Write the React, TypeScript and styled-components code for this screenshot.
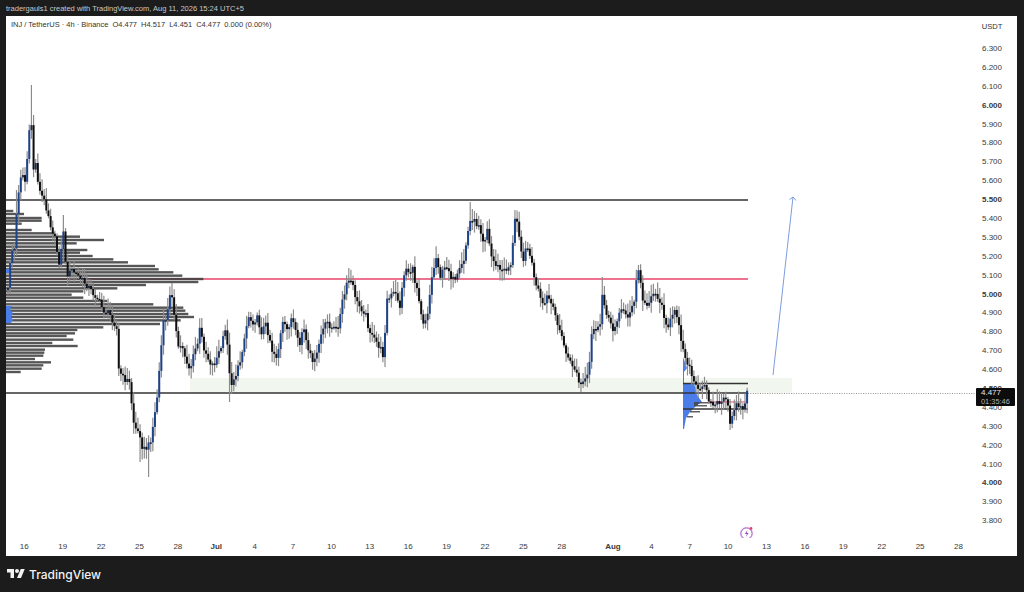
import * as React from 'react';
import styled, { createGlobalStyle } from 'styled-components';

const GlobalStyle = createGlobalStyle`
    html, body {
        margin: 0;
        padding: 0;
        background: #1c1c1c;
    }
    body {
        font-family: 'Liberation Sans', Arial, sans-serif;
    }
`

const Page = styled.div`
    width: 1024px;
    height: 592px;
    background: #1c1c1c;
    display: flex;
    flex-direction: column;
    overflow: hidden;
`

const Caption = styled.div`
    height: 16px;
    padding-left: 6px;
    font-size: 7.5px;
    line-height: 18px;
    color: #c9c9c9;
    white-space: nowrap;
`

const ChartPanel = styled.div`
    width: 1011px;
    height: 540px;
    margin-left: 6px;
    background: #fff;
    position: relative;
    display: grid;
    grid-template-columns: 969px 42px;
    grid-template-rows: 522px 18px;
`

const Plot = styled.div`
    position: relative;
    overflow: hidden;
    svg.plot {
        display: block;
        filter: blur(0.4px);
    }
`

const Legend = styled.div`
    position: absolute;
    left: 5px;
    top: 4px;
    font-size: 7.5px;
    line-height: 10px;
    color: #333;
    white-space: nowrap;
    span {
        margin-left: 4px;
    }
`

const PriceAxis = styled.div`
    display: flex;
    flex-direction: column;
    align-items: center;
    padding-right: 8px;
    padding-top: 5px;
    box-sizing: border-box;
`

const Currency = styled.div`
    height: 19px;
    line-height: 12px;
    font-size: 7.6px;
    color: #333;
`

const PriceLabel = styled.div<{ $bold: boolean }>`
    height: 18.9px;
    flex: none;
    line-height: 18.9px;
    font-size: 8px;
    color: #3a3a3a;
    font-weight: ${props => props.$bold ? 700 : 400};
`

const TimeAxis = styled.div`
    grid-column: 1 / 3;
    display: flex;
    margin-left: -0.9px;
    padding-top: 3px;
`

const TimeTick = styled.div<{ $bold: boolean; $gap: boolean }>`
    width: 38.4px;
    flex: none;
    text-align: center;
    font-size: 8px;
    line-height: 12px;
    color: #3a3a3a;
    font-weight: ${props => props.$bold ? 700 : 400};
    margin-left: ${props => props.$gap ? '12.8px' : '0'};
`

const PriceTag = styled.div`
    position: absolute;
    right: 2px;
    top: 372px;
    width: 39px;
    height: 18px;
    background: #0c0c0c;
    border-radius: 1px;
    color: #e6e6e6;
    font-size: 8px;
    line-height: 8.6px;
    padding: 1px 0 0 5px;
    box-sizing: border-box;
    small {
        display: block;
        font-size: 7.4px;
        color: #b4b4b4;
    }
`

const BoltBadge = styled.div`
    position: absolute;
    left: 733px;
    top: 509px;
    width: 16px;
    height: 16px;
`

const Footer = styled.div`
    flex: 1;
    display: flex;
    align-items: center;
    gap: 4px;
    padding: 0 0 0 7px;
    color: #f2f2f2;
    font-family: Inter, 'Liberation Sans', sans-serif;
    font-size: 12px;
    font-weight: 500;
    svg {
        display: block;
    }
`

// close prices read off the chart, as [x, y] in page pixels
const path: number[][] = [
    [8,290],[10,262],[13,246],[15,250],[17,205],[20,178],[22,172],[25,182],[28,150],[31,112],[33,170],[36,163],[39,190],
    [42,196],[45,203],[48,212],[50,223],[53,232],[55,240],[59,262],[61,255],[63,222],[65,262],[68,275],[72,270],[77,275],
    [82,280],[87,285],[92,292],[97,297],[103,310],[107,312],[110,315],[114,322],[117,330],[118,368],[123,378],[127,380],
    [130,384],[133,420],[137,432],[140,434],[143,450],[147,448],[150,443],[154,420],[157,398],[161,350],[163,325],[167,315],
    [171,290],[173,300],[175,320],[178,350],[181,345],[183,350],[187,362],[190,370],[195,350],[198,342],[200,328],[203,345],
    [205,350],[208,358],[212,365],[215,362],[218,355],[222,345],[225,330],[228,345],[230,385],[234,378],[237,372],[240,362],
    [243,345],[246,330],[248,315],[252,322],[257,318],[262,333],[265,323],[269,335],[272,350],[277,357],[280,340],[282,323],
    [287,330],[292,317],[297,340],[300,345],[303,325],[306,340],[308,353],[312,358],[315,362],[318,350],[320,337],[324,328],
    [327,322],[332,328],[337,330],[340,317],[343,298],[345,293],[348,280],[351,282],[354,290],[357,303],[361,308],[365,312],
    [368,325],[372,337],[377,343],[380,348],[383,355],[385,330],[387,300],[390,298],[393,293],[397,296],[400,307],[402,290],
    [405,267],[409,272],[413,270],[415,282],[418,290],[420,305],[423,322],[426,318],[428,310],[430,292],[432,277],[435,262],
    [437,255],[440,277],[444,270],[447,265],[451,276],[455,283],[458,275],[460,270],[464,260],[467,237],[470,222],[472,218],
    [476,224],[480,223],[482,240],[485,238],[488,225],[490,253],[494,262],[498,267],[503,272],[507,268],[510,266],[512,258],
    [514,225],[516,215],[519,232],[521,247],[524,262],[527,242],[530,256],[532,265],[534,275],[536,287],[539,292],[542,307],
    [545,303],[547,297],[550,300],[552,307],[555,315],[558,323],[561,335],[563,343],[567,355],[570,363],[573,365],[577,375],
    [580,387],[583,382],[587,380],[590,360],[592,330],[596,328],[600,330],[602,293],[604,303],[607,313],[610,322],[612,333],
    [616,322],[620,310],[624,312],[628,315],[632,308],[635,302],[637,270],[639,270],[642,297],[646,308],[649,300],[652,293],
    [657,295],[660,302],[662,308],[665,318],[668,327],[671,320],[675,312],[678,318],[680,327],[682,347],[685,355],[687,360],
    [690,370],[692,377],[695,385],[697,390],[700,390],[703,388],[705,380],[708,395],[710,403],[715,405],[719,402],[723,400],
    [726,402],[728,406],[730,427],[733,410],[736,405],[738,403],[741,408],[743,412],[745,400],[747,393],
]

// wick tips that stick out further than the noise gives
const spikes: number[][] = [
    [31,85],[148,477],[471,202],[515,210],[349,268],[638,265],[602,277],[230,402],[64,215],[17,190],[171,283],[580,392],[730,430],[140,462],
]

const noise = (i: number, k: number) => {
    const s = Math.sin(i * 12.9898 + k * 78.233) * 43758.5453
    return s - Math.floor(s)
}

const yAt = (x: number) => {
    for (let i = 1; i < path.length; i++) {
        if (x <= path[i][0]) {
            const [x0, y0] = path[i - 1]
            const [x1, y1] = path[i]
            return y0 + (y1 - y0) * (x - x0) / (x1 - x0)
        }
    }
    return path[path.length - 1][1]
}

interface Candle {
    x: number,
    high: number,
    low: number,
    top: number,
    height: number,
    color: string,
}

const bodyColor = (up: boolean, size: number) => {
    if (!up) return '#0f0f0f'
    return size > 7 ? '#1d4288' : '#1b2c50'
}

const buildCandles = (): Candle[] => {
    const list: Candle[] = []
    let prev = yAt(8)
    for (let i = 0; i * 2.13 + 8 < 748; i++) {
        const x = i * 2.13 + 8
        const close = yAt(x) + (noise(i, 1) - 0.5) * 7
        const top = Math.min(prev, close)
        const bottom = Math.max(prev, close)
        let high = top - 2 - noise(i, 2) * 10
        let low = bottom + 2 + noise(i, 3) * 9
        spikes.forEach(([sx, sy]) => {
            if (Math.abs(sx - x) < 1.1) {
                if (sy < top) high = sy
                else low = sy
            }
        })
        list.push({
            x,
            high,
            low,
            top,
            height: Math.max(bottom - top, 1.6),
            color: bodyColor(close < prev, bottom - top),
        })
        prev = close
    }
    return list
}

const candles = buildCandles()

// left volume profile: [y, right end] as read from a 3x crop
const leftProfile: number[][] = [
    [63,40],[72,72],[84,125],[92,125],[101,65],[120,95],[130,165],[140,240],[150,312],[160,230],[170,170],[180,262],[188,240],
    [198,278],[208,340],[217,384],[228,465],[238,476],[247,520],[257,547],[267,610],[276,595],[285,438],[295,352],[304,250],
    [314,215],[323,250],[333,322],[343,460],[353,550],[362,556],[372,565],[381,582],[391,542],[402,480],[412,310],[420,232],
    [430,225],[438,200],[449,220],[459,157],[468,233],[479,135],[488,133],[497,130],[507,105],[517,153],[526,130],[536,125],[546,62],
]

const prices = Array.from({ length: 26 }, (_, i) => (6.3 - i * 0.1).toFixed(3))
const boldPrices = ['6.000', '5.500', '5.000', '4.500', '4.000']

const ticks = ['16', '19', '22', '25', '28', 'Jul', '4', '7', '10', '13', '16', '19', '22', '25', '28', 'Aug', '4', '7', '10', '13', '16', '19', '22', '25', '28']

const ChartSvg: React.FC = () => (
    <svg className="plot" width={969} height={522} viewBox="6 16 969 522">
        <rect x={190} y={378} width={602} height={15} fill="#f1f7ef" />
        <line x1={6} x2={748} y1={279} y2={279} stroke="#e8426b" strokeWidth={1.5} />
        <g fill="#3f3f3f" opacity={0.88}>
            {leftProfile.map(([y, end]) => (
                <rect key={y} x={6} y={190 + y / 3 - 1.2} width={end / 3 - 6} height={2.4} />
            ))}
        </g>
        <g fill="#4a7de8">
            <rect x={6} y={269} width={4} height={4} />
            <path d="M6 306h6l-2 4 3 3-2 4 2 3-2 3H6z" />
            <path d="M683 357l4 11-3 4v11h10l3 12 5 7-6 4-6 6-4 6-2 11h-1z" />
        </g>
        <path d="M694 402h20v1.6h-16v1.4h9v1.6h-13zM690 411h10v1.4h-10zM687 416h6v1.4h-6z" fill="#444" opacity={0.85} />
        <g stroke="#333" strokeWidth={1.4}>
            <line x1={6} x2={748} y1={200} y2={200} />
            <line x1={6} x2={748} y1={393} y2={393} />
            <line x1={683} x2={748} y1={383.5} y2={383.5} />
            <line x1={683} x2={748} y1={409} y2={409} />
        </g>
        <line x1={708} x2={748} y1={402} y2={402} stroke="#e8426b" strokeWidth={1.2} />
        <line x1={748} x2={976} y1={393.5} y2={393.5} stroke="#777" strokeWidth={0.8} strokeDasharray="1 1.4" />
        {candles.map(c => (
            <line key={'w' + c.x} x1={c.x} x2={c.x} y1={c.high} y2={c.low} stroke="#8c8c8c" strokeWidth={1.2} />
        ))}
        {candles.map(c => (
            <rect key={'b' + c.x} x={c.x - 1} y={c.top} width={2} height={c.height} fill={c.color} />
        ))}
        <path d="M773 375L793 197M789.5 199.5L793 197L796 200.5" fill="none" stroke="#7d9ce0" strokeWidth={1} />
    </svg>
)

const App: React.FC = () => {
    return (
        <Page>
            <GlobalStyle />
            <Caption>tradergauls1 created with TradingView.com, Aug 11, 2026 15:24 UTC+5</Caption>
            <ChartPanel>
                <Plot>
                    <ChartSvg />
                    <Legend>
                        INJ / TetherUS · 4h · Binance
                        <span>O4.477</span>
                        <span>H4.517</span>
                        <span>L4.451</span>
                        <span>C4.477</span>
                        <span>0.000 (0.00%)</span>
                    </Legend>
                    <BoltBadge>
                        <svg width={16} height={16} viewBox="0 0 16 16">
                            <circle cx={7.5} cy={8.5} r={6.9} fill="#f7e6f7" />
                            <circle cx={7.5} cy={8.5} r={5.6} fill="#fff" stroke="#9a4fc4" strokeWidth={1} />
                            <path d="M8.6 5L5.8 9h2l-1 3 2.9-4H7.8z" fill="#9a4fc4" />
                            <circle cx={12} cy={3.5} r={1.4} fill="#e8426b" />
                        </svg>
                    </BoltBadge>
                </Plot>
                <PriceAxis>
                    <Currency>USDT</Currency>
                    {prices.map(p => (
                        <PriceLabel key={p} $bold={boldPrices.includes(p)}>{p}</PriceLabel>
                    ))}
                </PriceAxis>
                <TimeAxis>
                    {ticks.map((t, i) => (
                        <TimeTick key={i} $bold={t === 'Jul' || t === 'Aug'} $gap={t === 'Aug'}>{t}</TimeTick>
                    ))}
                </TimeAxis>
                <PriceTag>
                    4.477
                    <small>01:35:46</small>
                </PriceTag>
            </ChartPanel>
            <Footer>
                <svg width={18} height={14} viewBox="0 0 36 28">
                    <path fill="#f2f2f2" d="M14 22H7V11H0V4h14v18zM28 22h-8l7.5-18h8L28 22z" />
                    <circle fill="#f2f2f2" cx={20} cy={8} r={4} />
                </svg>
                TradingView
            </Footer>
        </Page>
    );
};

export default App;
